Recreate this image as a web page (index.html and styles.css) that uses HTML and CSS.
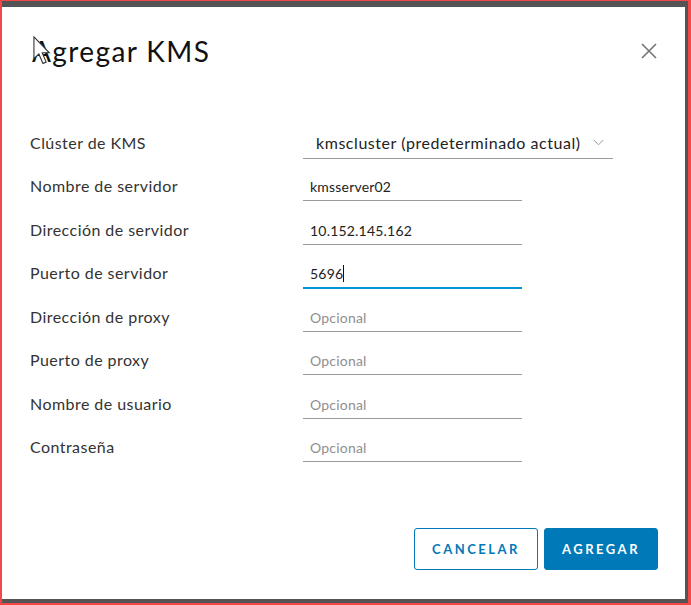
FILE: index.html
```html
<!DOCTYPE html>
<html>
  <head>
    <title>Agregar KMS</title>
    <link rel="stylesheet" href="styles.css">
  </head>
  <body>
    <div class="frame">
      <div class="dialog">
        <div class="dialog-header">
          <h1 class="title">Agregar KMS</h1>
          <button class="close" type="button" aria-label="Cerrar">
            <svg width="16" height="16" viewBox="0 0 16 16">
              <path d="M1 1 L15 15 M15 1 L1 15" stroke="#747474" stroke-width="1.6" fill="none"/>
            </svg>
          </button>
          <!-- mouse pointer sitting over the title -->
          <svg class="pointer" width="19" height="29" viewBox="0 0 13 20">
            <path d="M0.6 0.6 V15.6 L4 12.4 L6.8 19 L9 18 L6.3 11.6 H11.2 Z" fill="#fff" stroke="#333" stroke-width="0.75" stroke-linejoin="miter"/>
          </svg>
        </div>

        <form class="form">
          <label class="label">Clúster de KMS</label>
          <div class="select">
            <span>kmscluster (predeterminado actual)</span>
            <svg width="11" height="7" viewBox="0 0 11 7">
              <path d="M0.5 0.8 L5.5 5.8 L10.5 0.8" stroke="#9a9a9a" stroke-width="1" fill="none"/>
            </svg>
          </div>

          <label class="label" for="server">Nombre de servidor</label>
          <input class="input" id="server" type="text" value="kmsserver02">

          <label class="label" for="address">Dirección de servidor</label>
          <input class="input" id="address" type="text" value="10.152.145.162">

          <label class="label" for="port">Puerto de servidor</label>
          <div class="input focused">5696<span class="caret"></span></div>

          <label class="label" for="proxy">Dirección de proxy</label>
          <input class="input" id="proxy" type="text" placeholder="Opcional">

          <label class="label" for="proxyPort">Puerto de proxy</label>
          <input class="input" id="proxyPort" type="text" placeholder="Opcional">

          <label class="label" for="user">Nombre de usuario</label>
          <input class="input" id="user" type="text" placeholder="Opcional">

          <label class="label" for="pass">Contraseña</label>
          <input class="input" id="pass" type="text" placeholder="Opcional">
        </form>

        <div class="actions">
          <button class="btn btn-outline" type="button">Cancelar</button>
          <button class="btn btn-primary" type="button">Agregar</button>
        </div>
      </div>
    </div>
  </body>
</html>
```

FILE: styles.css
```css
html, body {
  margin: 0;
  height: 100%;
}

body {
  background-color: #f44848;
  font-family: 'Lato', 'Liberation Sans', sans-serif;
  color: #313131;
}

.frame {
  box-sizing: border-box;
  height: 602px;
  margin: 1px 3px 2px 2px;
  border-top: 6px solid #545454;
  border-right: 3px solid #545454;
  border-bottom: 4px solid #545454;
  background-color: #fff;
}

.dialog {
  position: relative;
  display: flex;
  flex-direction: column;
  height: 100%;
  padding: 0 27px 0 28px;
  box-sizing: border-box;
}

.dialog-header {
  display: flex;
  align-items: center;
  justify-content: space-between;
  height: 88px;
}

.title {
  margin: 0 0 0 2px;
  font-size: 28px;
  font-weight: 400;
  letter-spacing: 1.4px;
  color: #111;
}

.close {
  border: none;
  background: transparent;
  padding: 0;
  margin-right: 1px;
  width: 16px;
  height: 16px;
  cursor: pointer;
}

.pointer {
  position: absolute;
  left: 31px;
  top: 29px;
}

.form {
  display: grid;
  grid-template-columns: 273px 310px;
  grid-auto-rows: 43.5px;
  margin-top: 19px;
}

.label {
  align-self: end;
  height: 28px;
  line-height: 26px;
  font-size: 16px;
  letter-spacing: 0.45px;
  color: #333;
}

.select {
  align-self: end;
  margin-bottom: -1.5px;
  display: flex;
  align-items: center;
  justify-content: space-between;
  height: 31px;
  padding: 0 9px 0 13px;
  border-bottom: 1px solid #9a9a9a;
  font-size: 16px;
  letter-spacing: 0.55px;
  color: #222;
}

.input {
  align-self: end;
  box-sizing: border-box;
  width: 219px;
  height: 28px;
  padding: 0 7px;
  border: none;
  border-bottom: 1px solid #9a9a9a;
  outline: none;
  font-family: inherit;
  font-size: 14px;
  letter-spacing: 0.2px;
  color: #222;
  background: transparent;
}

.input::placeholder {
  color: #8f8f8f;
}

.focused {
  display: flex;
  align-items: center;
  height: 29px;
  margin-bottom: -1px;
  border-bottom: 2px solid #0095d3;
}

.caret {
  display: inline-block;
  width: 1px;
  height: 17px;
  background-color: #111;
}

.actions {
  display: flex;
  justify-content: flex-end;
  gap: 6px;
  margin-top: auto;
  margin-bottom: 29px;
}

.btn {
  height: 42px;
  border-radius: 3px;
  font-family: inherit;
  font-size: 13px;
  font-weight: 700;
  letter-spacing: 2.5px;
  text-transform: uppercase;
  cursor: pointer;
}

.btn-outline {
  width: 124px;
  border: 1px solid #0079b8;
  background-color: #fff;
  color: #0079b8;
}

.btn-primary {
  width: 114px;
  border: 1px solid #0079b8;
  background-color: #0079b8;
  color: #fff;
}
```
